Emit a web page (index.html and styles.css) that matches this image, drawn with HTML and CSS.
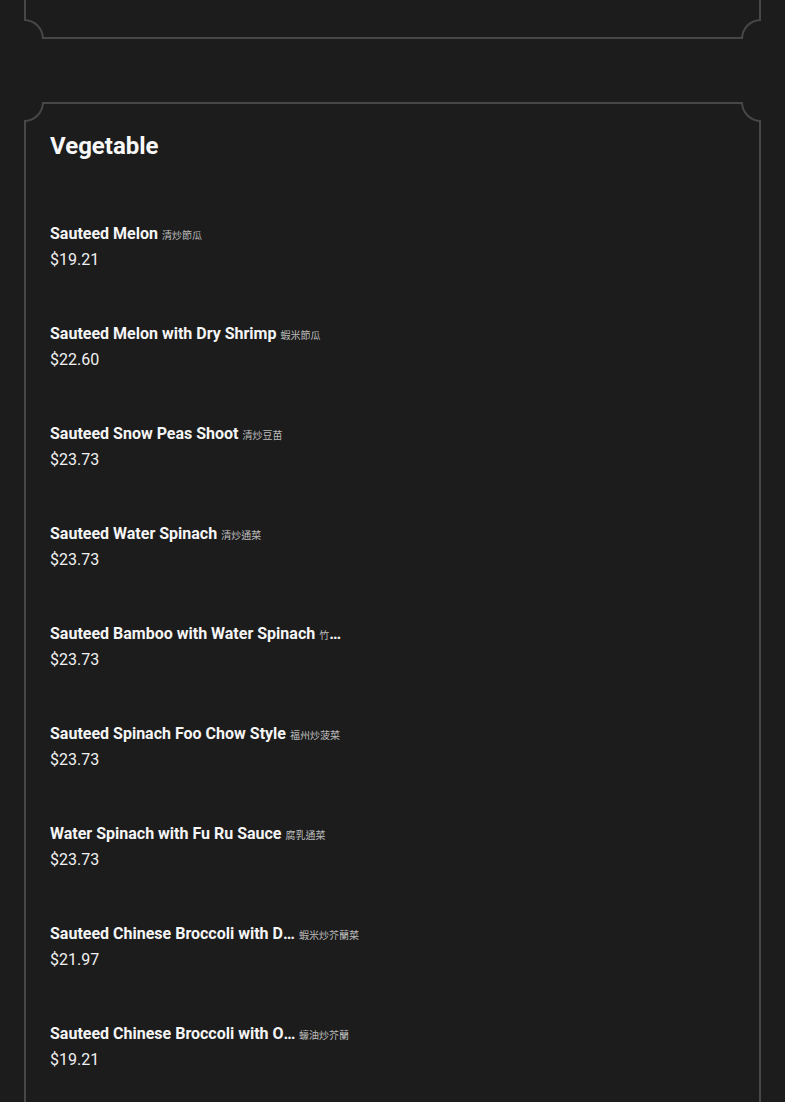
FILE: index.html
```html
<!DOCTYPE html>
<html lang="en">
<head>
<meta charset="utf-8">
<title>Menu</title>
<link rel="stylesheet" href="styles.css">
</head>
<body>
<div class="page">
  <section class="card card-prev">
    <span class="corner tl"></span><span class="corner tr"></span><span class="corner bl"></span><span class="corner br"></span>
  </section>

  <section class="card">
    <span class="corner tl"></span><span class="corner tr"></span><span class="corner bl"></span><span class="corner br"></span>
    <h2 class="cat-title">Vegetable</h2>
    <ul class="items">
      <li class="item"><div class="name"><span class="en">Sauteed Melon</span> <span class="cn">清炒節瓜</span></div><div class="price">$19.21</div></li>
      <li class="item"><div class="name"><span class="en">Sauteed Melon with Dry Shrimp</span> <span class="cn">蝦米節瓜</span></div><div class="price">$22.60</div></li>
      <li class="item"><div class="name"><span class="en">Sauteed Snow Peas Shoot</span> <span class="cn">清炒豆苗</span></div><div class="price">$23.73</div></li>
      <li class="item"><div class="name"><span class="en">Sauteed Water Spinach</span> <span class="cn">清炒通菜</span></div><div class="price">$23.73</div></li>
      <li class="item"><div class="name"><span class="en">Sauteed Bamboo with Water Spinach</span> <span class="cn">竹筍炒通菜</span></div><div class="price">$23.73</div></li>
      <li class="item"><div class="name"><span class="en">Sauteed Spinach Foo Chow Style</span> <span class="cn">福州炒菠菜</span></div><div class="price">$23.73</div></li>
      <li class="item"><div class="name"><span class="en">Water Spinach with Fu Ru Sauce</span> <span class="cn">腐乳通菜</span></div><div class="price">$23.73</div></li>
      <li class="item"><div class="name name-split"><span class="en short">Sauteed Chinese Broccoli with Dry Shrimp</span><span class="cn">蝦米炒芥蘭菜</span></div><div class="price">$21.97</div></li>
      <li class="item"><div class="name name-split"><span class="en short">Sauteed Chinese Broccoli with Oyster Sauce</span><span class="cn">蠔油炒芥蘭</span></div><div class="price">$19.21</div></li>
    </ul>
  </section>
</div>
</body>
</html>
```
FILE: styles.css
```css
html, body {
  margin: 0;
  padding: 0;
  background: #1c1c1c;
  color: #f5f5f5;
  font-family: Roboto, "Noto Sans", "Noto Sans CJK TC", sans-serif;
  height: 1102px;
  overflow: hidden;
}

.page {
  padding: 0 24px;
  display: flex;
  flex-direction: column;
  gap: 63px;
}

.card {
  position: relative;
  border: 2px solid #474747;
  padding: 28px 24px 0;
  min-height: 1100px;
}

.card-prev {
  min-height: 0;
  height: 100px;
  margin-top: -65px;
  padding: 0;
}

.corner {
  position: absolute;
  width: 20px;
  height: 20px;
  background: #1c1c1c;
  box-sizing: border-box;
  border: 0 solid #474747;
}
.corner.tl {
  left: -2px; top: -2px;
  border-right-width: 2px; border-bottom-width: 2px;
  border-bottom-right-radius: 20px;
}
.corner.tr {
  right: -2px; top: -2px;
  border-left-width: 2px; border-bottom-width: 2px;
  border-bottom-left-radius: 20px;
}
.corner.bl {
  left: -2px; bottom: -2px;
  border-right-width: 2px; border-top-width: 2px;
  border-top-right-radius: 20px;
}
.corner.br {
  right: -2px; bottom: -2px;
  border-left-width: 2px; border-top-width: 2px;
  border-top-left-radius: 20px;
}

.cat-title {
  margin: 0 0 36px;
  font-size: 24px;
  line-height: 28.8px;
  font-weight: 700;
  color: #f7f7f7;
}

.items {
  list-style: none;
  margin: 0;
  padding: 0;
}

.item {
  padding: 26px 0 25px;
}

.name {
  height: 22px;
  font-size: 16px;
  line-height: 22px;
  font-weight: 700;
  color: #f5f5f5;
  max-width: 300px;
  white-space: nowrap;
  overflow: hidden;
  text-overflow: ellipsis;
}

.name.name-split {
  max-width: 340px;
}

.en.short {
  display: inline-block;
  max-width: 246px;
  margin-right: 3px;
  overflow: hidden;
  text-overflow: ellipsis;
  vertical-align: top;
}

.cn {
  font-family: "Noto Sans CJK TC", sans-serif;
  font-size: 10px;
  line-height: 1;
  font-weight: 400;
  color: #bdbdbd;
}

.price {
  margin-top: 3px;
  font-size: 16px;
  line-height: 24px;
  font-weight: 400;
  color: #f0f0f0;
}
```
